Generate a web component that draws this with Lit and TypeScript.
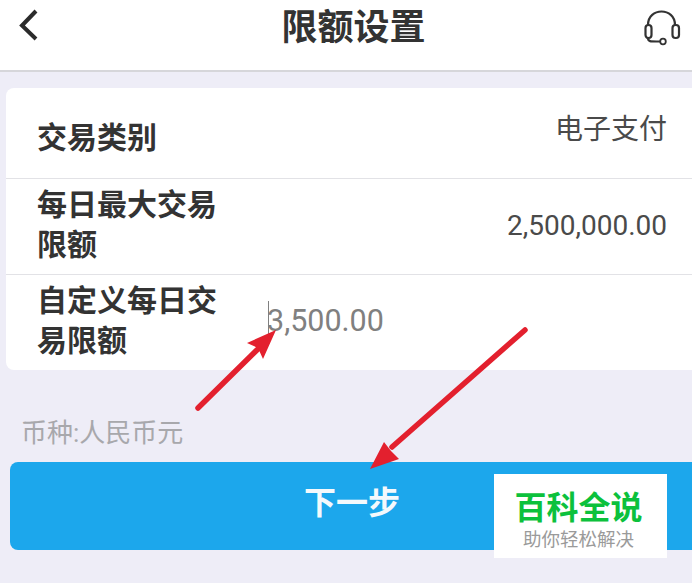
import { LitElement, html, css } from 'lit';
import { customElement } from 'lit/decorators.js';

@customElement('app-root')
export class AppRoot extends LitElement {
  static styles = css`
    :host {
      display: block;
      position: relative;
      width: 692px;
      height: 583px;
      overflow: hidden;
      background: #eeedf7;
      font-family: Roboto, "Noto Sans CJK SC", sans-serif;
    }

    .header {
      box-sizing: border-box;
      height: 72px;
      display: flex;
      align-items: flex-start;
      justify-content: space-between;
      background: #fff;
      border-bottom: 2px solid #d6d6da;
    }

    .back {
      margin: 8px 0 0 17px;
    }

    .title {
      margin: 3px 0 0 24px;
      font-size: 36px;
      line-height: 50px;
      font-weight: 700;
      color: #333;
    }

    .service {
      margin: 8px 6px 0 0;
    }

    .card {
      margin: 16px 0 0 6px;
      background: #fff;
      border-radius: 8px 0 0 8px;
    }

    .row {
      box-sizing: border-box;
      display: flex;
      justify-content: space-between;
      padding: 0 25px 0 31px;
      border-bottom: 1px solid #e2e2e6;
    }

    .row:last-child {
      border-bottom: none;
    }

    .row.kind {
      height: 91px;
      align-items: center;
    }

    .row.daily {
      height: 96px;
      align-items: center;
    }

    .row.custom {
      height: 95px;
      align-items: center;
      justify-content: flex-start;
    }

    .label {
      width: 185px;
      font-size: 30px;
      line-height: 40px;
      font-weight: 700;
      color: #333;
    }

    .kind .label {
      margin-top: 10px;
    }

    .daily .label,
    .custom .label {
      margin-top: -4px;
    }

    .value {
      font-size: 28px;
      line-height: 40px;
      color: #4a4a4a;
    }

    .kind .value {
      margin-top: -7px;
    }

    .daily .value {
      margin-top: -2px;
    }

    .amount {
      margin: -4px 0 0 46px;
      font-size: 30.5px;
      line-height: 40px;
      color: #808080;
      text-indent: -2px;
      border-left: 1px solid #808080;
    }

    .note {
      margin: 45px 0 0 21px;
      font-size: 26px;
      line-height: 36px;
      color: #a8a8ac;
    }

    .next {
      height: 88px;
      margin: 11px 0 0 10px;
      display: flex;
      align-items: center;
      justify-content: center;
      background: #1ca7ec;
      border-radius: 8px 0 0 8px;
      font-size: 32px;
      font-weight: 700;
      color: #f4f9fc;
    }

    .next span {
      margin: -12px 0 0 2px;
    }

    .arrows {
      position: absolute;
      left: 0;
      top: 0;
    }

    .mark {
      position: absolute;
      left: 494px;
      top: 474px;
      width: 173px;
      height: 84px;
      display: flex;
      flex-direction: column;
      align-items: center;
      background: #fff;
    }

    .mark b {
      margin: 15px 4px 0 0;
      font-size: 32px;
      line-height: 39px;
      font-weight: 700;
      color: #0cc13c;
    }

    .mark small {
      margin-right: 4px;
      font-size: 18.5px;
      line-height: 24px;
      color: #9a9a9a;
    }
  `;

  render() {
    return html`
      <div class="header">
        <svg class="back" width="24" height="34" viewBox="0 0 24 34">
          <path d="M19 3 L5 17.5 L19 31" fill="none" stroke="#2b2b2b" stroke-width="4" />
        </svg>
        <div class="title">限额设置</div>
        <svg class="service" width="44" height="40" viewBox="0 0 44 40">
          <path d="M6 17 C6 -1 33 -1 33 17" fill="none" stroke="#333" stroke-width="2.2" />
          <rect x="3.5" y="17" width="6" height="13" rx="3" fill="none" stroke="#333" stroke-width="2.2" />
          <rect x="30.5" y="17" width="6.5" height="13" rx="3" fill="none" stroke="#333" stroke-width="2.2" />
          <path d="M6 30 C6 34 9 33.500 18 33.500" fill="none" stroke="#333" stroke-width="2.2" />
          <circle cx="21" cy="33.500" r="2.800" fill="#fff" stroke="#333" stroke-width="1.800" />
        </svg>
      </div>

      <div class="card">
        <div class="row kind">
          <div class="label">交易类别</div>
          <div class="value">电子支付</div>
        </div>
        <div class="row daily">
          <div class="label">每日最大交易限额</div>
          <div class="value">2,500,000.00</div>
        </div>
        <div class="row custom">
          <div class="label">自定义每日交易限额</div>
          <div class="amount">3,500.00</div>
        </div>
      </div>

      <div class="note">币种:人民币元</div>
      <div class="next"><span>下一步</span></div>

      <svg class="arrows" width="692" height="583" viewBox="0 0 692 583">
        <path d="M198 408 L258 349" stroke="#e3202e" stroke-width="5.500" stroke-linecap="round" fill="none" />
        <polygon points="276,330 247,343 258,348 263,359" fill="#e3202e" />
        <path d="M525 330 L392 447" stroke="#e3202e" stroke-width="5.500" stroke-linecap="round" fill="none" />
        <polygon points="370,469 384,442 391,451 399,459" fill="#e3202e" />
      </svg>

      <div class="mark">
        <b>百科全说</b>
        <small>助你轻松解决</small>
      </div>
    `;
  }
}
